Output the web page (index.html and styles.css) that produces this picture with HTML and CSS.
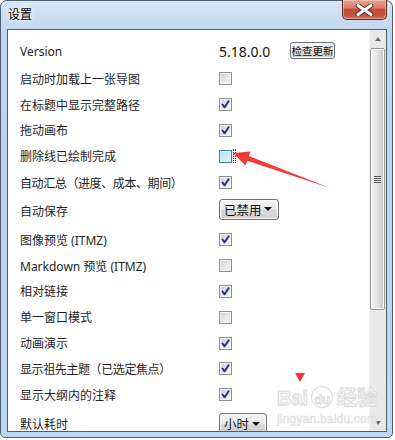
FILE: index.html
```html
<!DOCTYPE html>
<html lang="zh-CN">
<head>
    <meta charset="UTF-8">
    <meta name="viewport" content="width=device-width, initial-scale=1.0">
    <title>设置</title>
    <link rel="stylesheet" href="styles.css">
</head>
<body>
    <div class="window">
        <div class="titlebar">
            <span class="title">设置</span>
            <div class="close">
                <svg width="19" height="12" viewBox="0 0 19 12">
                    <path d="M3 1.5 L16 10.5 M16 1.5 L3 10.5" stroke="#4a2a24" stroke-width="4.8" stroke-linecap="round"/>
                    <path d="M3 1.5 L16 10.5 M16 1.5 L3 10.5" stroke="#ffffff" stroke-width="3" stroke-linecap="round"/>
                </svg>
            </div>
        </div>

        <div class="client">
            <div class="list">
                <div class="row version">
                    <span>Version</span>
                    <div class="version-box">
                        <span class="version-num">5.18.0.0</span>
                        <button class="btn">检查更新</button>
                    </div>
                </div>
                <div class="row"><span>启动时加载上一张导图</span><span class="cb"></span></div>
                <div class="row"><span>在标题中显示完整路径</span><span class="cb checked"><svg viewBox="0 0 11 11"><path d="M2.5 5.5 L4.6 8.3 L8.6 2.2"/></svg></span></div>
                <div class="row"><span>拖动画布</span><span class="cb checked"><svg viewBox="0 0 11 11"><path d="M2.5 5.5 L4.6 8.3 L8.6 2.2"/></svg></span></div>
                <div class="row"><span>删除线已绘制完成</span><div class="focus-wrap"><span class="cb hover"></span><span class="focus"></span></div></div>
                <div class="row"><span class="cjk">自动汇总（进度、成本、期间）</span><span class="cb checked"><svg viewBox="0 0 11 11"><path d="M2.5 5.5 L4.6 8.3 L8.6 2.2"/></svg></span></div>
                <div class="row combo-row"><span>自动保存</span><div class="combo wide">已禁用<i class="caret"></i></div></div>
                <div class="row"><span>图像预览 (ITMZ)</span><span class="cb checked"><svg viewBox="0 0 11 11"><path d="M2.5 5.5 L4.6 8.3 L8.6 2.2"/></svg></span></div>
                <div class="row"><span>Markdown 预览 (ITMZ)</span><span class="cb"></span></div>
                <div class="row"><span>相对链接</span><span class="cb checked"><svg viewBox="0 0 11 11"><path d="M2.5 5.5 L4.6 8.3 L8.6 2.2"/></svg></span></div>
                <div class="row"><span>单一窗口模式</span><span class="cb"></span></div>
                <div class="row"><span>动画演示</span><span class="cb checked"><svg viewBox="0 0 11 11"><path d="M2.5 5.5 L4.6 8.3 L8.6 2.2"/></svg></span></div>
                <div class="row"><span class="cjk">显示祖先主题（已选定焦点）</span><span class="cb checked"><svg viewBox="0 0 11 11"><path d="M2.5 5.5 L4.6 8.3 L8.6 2.2"/></svg></span></div>
                <div class="row"><span>显示大纲内的注释</span><span class="cb checked"><svg viewBox="0 0 11 11"><path d="M2.5 5.5 L4.6 8.3 L8.6 2.2"/></svg></span></div>
                <div class="row combo-row"><span>默认耗时</span><div class="combo low">小时<i class="caret"></i></div></div>
            </div>

            <div class="scrollbar">
                <div class="sb-btn"><i class="sb-up"></i></div>
                <div class="sb-thumb"><span class="grip"></span></div>
                <div class="sb-btn sb-bottom"><i class="sb-down"></i></div>
            </div>
        </div>
    </div>

    <!-- annotation drawn over the screenshot -->
    <svg class="marks" width="395" height="440" viewBox="0 0 395 440">
        <polygon points="233,153 250.5,151.5 248.9,156 330,188 247.3,160.8 245.5,165.5" fill="#f23a3a"/>
        <polygon points="295,373 305,373 300,382" fill="#f53434"/>
    </svg>

    <div class="watermark">
        <div class="wm-top">Bai<span class="paw">du</span>经验</div>
        <div class="wm-url">jingyan.baidu.com</div>
    </div>
</body>
</html>
```

FILE: styles.css
```css
* {
    box-sizing: border-box;
}
body {
    margin: 0;
    position: relative;
    background: #fff;
    font-family: "Noto Sans", "Noto Sans CJK SC", sans-serif;
    font-size: 12px;
    color: #1e1e1e;
}
.window {
    width: 393px;
    height: 438px;
    border: 1px solid #4f5f72;
    border-radius: 7px 7px 5px 5px;
    background: linear-gradient(180deg, #d6e6f6 0%, #c0d7ef 7%, #bcd4ee 40%, #bcd8f6 100%);
    padding: 0 5px 5px 6px;
    display: flex;
    flex-direction: column;
}
.titlebar {
    height: 28px;
    display: flex;
    justify-content: space-between;
    align-items: flex-start;
}
.title {
    margin: 6px 0 0 1px;
    line-height: 16px;
    color: #000;
    text-shadow: 0 0 5px #fff, 0 0 8px #fff;
}
.close {
    margin-top: -1px;
    width: 45px;
    height: 20px;
    border: 1px solid #5a2c22;
    border-top: none;
    border-radius: 0 0 5px 5px;
    background: linear-gradient(180deg, #eaa796 0%, #d97b6a 42%, #c44a38 50%, #c0503e 78%, #d97560 100%);
    display: flex;
    align-items: center;
    justify-content: center;
    box-shadow: inset 0 0 0 1px rgba(255, 220, 210, 0.45);
}
.client {
    height: 403px;
    display: flex;
    border: 1px solid #5a5a5a;
    background: #fff;
    overflow: hidden;
}
.list {
    flex: 1;
    padding: 6px 0 0 12px;
}
.row {
    display: grid;
    grid-template-columns: 199px auto;
    align-items: center;
    height: 25.8px;
}
.row.version {
    height: 30px;
}
.row.combo-row {
    height: 32px;
}
.cjk {
    font-family: "Noto Sans CJK SC", sans-serif;
    letter-spacing: -0.4px;
}
.version-box {
    display: flex;
    align-items: center;
}
.version-num {
    font-size: 14px;
    width: 71px;
    color: #111;
}
.btn {
    width: 45px;
    height: 17px;
    padding: 0;
    margin-top: -1px;
    font-family: "Noto Sans CJK SC", sans-serif;
    font-size: 10.5px;
    line-height: 15px;
    color: #111;
    border: 1px solid #707070;
    border-radius: 3px;
    background: linear-gradient(180deg, #f2f2f2 0%, #ebebeb 50%, #dddddd 50%, #cfcfcf 100%);
    box-shadow: inset 0 0 0 1px #fcfcfc;
}
.cb {
    width: 13px;
    height: 13px;
    border: 1px solid #8e8f8f;
    background: linear-gradient(135deg, #c9cdd3 0%, #e4e6e8 50%, #f7f7f7 100%);
    box-shadow: inset 0 0 0 1px #f4f4f4;
    display: flex;
}
.cb svg {
    width: 11px;
    height: 11px;
}
.cb svg path {
    fill: none;
    stroke: #28308a;
    stroke-width: 2;
    stroke-linecap: round;
    stroke-linejoin: round;
}
.cb.hover {
    border-color: #3c7fb1;
    background: linear-gradient(135deg, #b1dcf8 0%, #cfeafb 55%, #e8f6fd 100%);
    box-shadow: inset 0 0 0 1px #def1fc;
}
.focus-wrap {
    display: flex;
    align-items: center;
}
.focus {
    width: 3px;
    height: 14px;
    margin-left: 1px;
    border-left: 1px dotted #333;
    border-right: 1px dotted #333;
}
.combo {
    width: 48px;
    height: 21px;
    border: 1px solid #707070;
    border-radius: 3px;
    background: linear-gradient(180deg, #f2f2f2 0%, #ebebeb 50%, #dddddd 50%, #cfcfcf 100%);
    box-shadow: inset 0 0 0 1px #fbfbfb;
    display: flex;
    align-items: center;
    justify-content: space-between;
    padding: 0 6px 0 4px;
    font-size: 12.5px;
    color: #111;
}
.combo.wide {
    width: 60px;
    margin-top: -3px;
}
.caret {
    width: 0;
    height: 0;
    border-left: 4px solid transparent;
    border-right: 4px solid transparent;
    border-top: 4px solid #111;
}
.scrollbar {
    width: 17px;
    background: #e9e9e9;
    border-left: 1px solid #f4f4f4;
    display: flex;
    flex-direction: column;
    align-items: flex-start;
}
.sb-btn {
    width: 16px;
    height: 17px;
    display: flex;
    align-items: center;
    justify-content: center;
}
.sb-bottom {
    margin-top: auto;
}
.sb-up, .sb-down {
    width: 0;
    height: 0;
    border-left: 3.5px solid transparent;
    border-right: 3.5px solid transparent;
}
.sb-up {
    border-bottom: 4px solid #6d6d6d;
}
.sb-down {
    border-top: 4px solid #6d6d6d;
}
.sb-thumb {
    width: 15px;
    height: 262px;
    margin-top: 1px;
    border: 1px solid #979797;
    border-radius: 2px;
    background: linear-gradient(90deg, #f4f4f4 0%, #e8e8e8 40%, #d6d6d6 70%, #cbcbcb 100%);
    box-shadow: inset 0 0 0 1px #fafafa;
    display: flex;
    align-items: center;
    justify-content: center;
}
.grip {
    width: 7px;
    height: 7px;
    background: repeating-linear-gradient(180deg, #555 0, #555 1px, #e8e8e8 1px, #e8e8e8 2px);
}
.marks {
    position: absolute;
    left: 0;
    top: 0;
    pointer-events: none;
}
.watermark {
    position: absolute;
    left: 277px;
    top: 386px;
    color: #f7f7f7;
    -webkit-text-stroke: 0.8px #d8d8d8;
    font-family: "Liberation Sans", "Noto Sans CJK SC", sans-serif;
    line-height: 1;
}
.wm-top {
    font-size: 20px;
    font-weight: bold;
    display: flex;
    align-items: flex-end;
}
.paw {
    font-size: 13px;
    margin: 0 4px 0 3px;
    padding: 6px 2px 1px;
    border: 1.5px solid #dcdcdc;
    border-radius: 50%;
}
.wm-url {
    margin-top: 5px;
    font-size: 12px;
    letter-spacing: 0.2px;
    -webkit-text-stroke: 0.5px #d8d8d8;
}
```
